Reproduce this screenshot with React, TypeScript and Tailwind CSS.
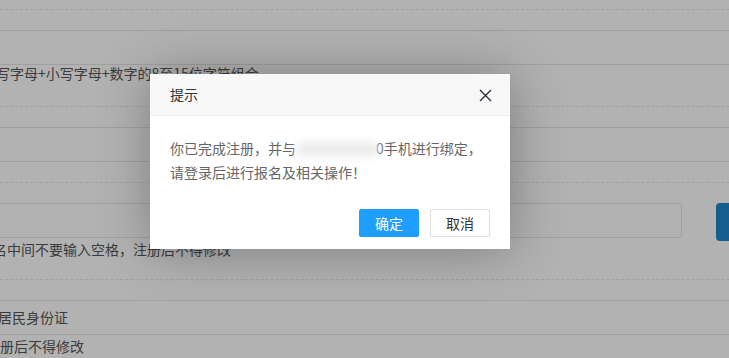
import React from "react";

function Field({ right }: { right?: boolean }) {
  return (
    <div className="flex h-[38px] items-start">
      <div
        className={
          right
            ? "h-[35px] w-[722px] rounded-[2px] border border-[#e4e4e4]"
            : "h-[35px] w-[900px] rounded-[2px] border border-[#e4e4e4]"
        }
      />
      {right ? (
        <div className="ml-[34px] h-[38px] w-[110px] shrink-0 rounded-[4px] bg-[#1e87cc]" />
      ) : null}
    </div>
  );
}

export default function App() {
  return (
    <div className="relative h-[358px] w-[729px] overflow-hidden bg-white font-['Noto_Sans_CJK_SC','Microsoft_YaHei',sans-serif] text-[14px] text-[#555]">
      {/* underlying form page, label column scrolled out at left */}
      <div className="ml-[-40px] w-[1000px]">
        <div className="h-[10px] border-b border-dashed border-[#e6e6e6]" />

        <div className="border-b border-dashed border-[#e6e6e6] pt-[20px] pb-[25px]">
          <div className="h-[35px] w-[900px] rounded-[2px] border border-[#e4e4e4]" />
          <div className="pl-[36px] leading-[16px]">写字母+小写字母+数字的8至15位字符组合</div>
        </div>

        <div className="border-b border-dashed border-[#e6e6e6] pt-[20px] pb-[20px]">
          <div className="h-[35px] w-[900px] rounded-[2px] border border-[#e4e4e4]" />
        </div>

        <div className="border-b border-dashed border-[#e6e6e6] pt-[20px] pb-[22px]">
          <Field right />
          <div className="pl-[33px] leading-[16px]">名中间不要输入空格，注册后不得修改</div>
        </div>

        <div className="pt-[20px]">
          <div className="flex h-[35px] w-[900px] items-center rounded-[2px] border border-[#e4e4e4] pl-[37px]">
            居民身份证
          </div>
          <div className="mt-[3px] pl-[40px] leading-[16px]">册后不得修改</div>
        </div>
      </div>

      {/* shade */}
      <div className="absolute inset-0 bg-black/30" />

      {/* layer dialog */}
      <div className="absolute left-[150px] top-[74px] w-[360px] bg-white shadow-[1px_1px_50px_rgba(0,0,0,0.3)]">
        <div className="flex h-[42px] items-center justify-between border-b border-[#eeeeee] bg-[#f8f8f8] pl-[20px] pr-[18px] text-[14px] text-[#333]">
          <span>提示</span>
          <svg width="13" height="13" viewBox="0 0 13 13" className="mt-[1px]">
            <path d="M1 1 L12 12 M12 1 L1 12" stroke="#2e2d3c" strokeWidth="1.4" fill="none" />
          </svg>
        </div>
        <div className="p-[20px] text-[14px] leading-[24px] text-[#666]">
          <div className="whitespace-nowrap">
            你已完成注册，并与
            <span className="relative z-10 inline-block h-[14px] w-[84px] translate-y-[2px] rounded-full bg-[#ececec] blur-[4px]" />
            <span className="ml-[-4px]">0</span>手机进行绑定，
          </div>
          <div>请登录后进行报名及相关操作！</div>
        </div>
        <div className="flex justify-end pr-[20px] pb-[12px] pt-[5px] text-[14px]">
          <div className="flex h-[28px] items-center rounded-[2px] border border-[#1e9fff] bg-[#1e9fff] px-[15px] text-white">
            确定
          </div>
          <div className="ml-[11px] flex h-[28px] items-center rounded-[2px] border border-[#dedede] bg-white px-[15px] text-[#333]">
            取消
          </div>
        </div>
      </div>
    </div>
  );
}
